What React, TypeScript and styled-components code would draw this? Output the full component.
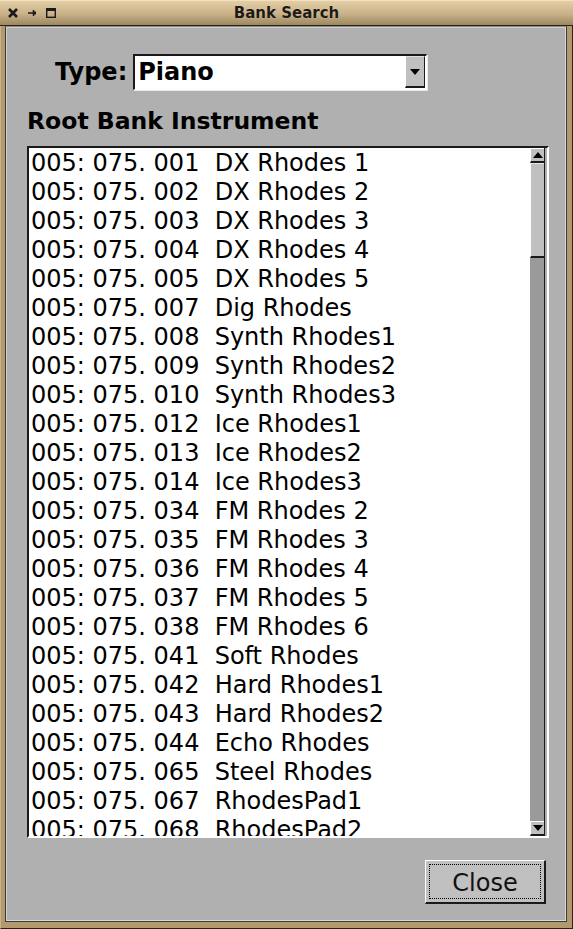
import React from "react";
import styled, { createGlobalStyle } from "styled-components";

const Global = createGlobalStyle`
  html, body { margin: 0; padding: 0; background: #b0b0b0; }
  body { font-family: "DejaVu Sans", "Liberation Sans", sans-serif; }
  * { box-sizing: border-box; }
`;

const Window = styled.div`
  width: 573px;
  height: 929px;
  display: flex;
  flex-direction: column;
  background: #b39a6e;
`;

const TitleBar = styled.div`
  height: 26px;
  flex: none;
  position: relative;
  display: flex;
  align-items: center;
  justify-content: center;
  background: linear-gradient(#e4cea6, #c8b088 55%, #9c885f);
  border-bottom: 1px solid #2a2418;
  border-top: 1px solid #f0e0c0;
`;

const TitleText = styled.div`
  font-family: "DejaVu Sans", sans-serif;
  font-weight: bold;
  font-size: 15px;
  color: #1c1a16;
  text-shadow: 0 0 1px rgba(255, 240, 210, 0.6);
`;

const TitleIcons = styled.div`
  position: absolute;
  left: 8px;
  top: 7px;
  display: flex;
  gap: 10px;
  align-items: center;
`;

const Frame = styled.div`
  flex: 1;
  display: flex;
  flex-direction: column;
  padding: 0 5px 6px 4px;
  border-left: 1px solid #c9b48c;
  border-right: 1px solid #2a2418;
  border-bottom: 1px solid #2a2418;
`;

const Content = styled.div`
  flex: 1;
  background: #b0b0b0;
  border-left: 1px solid #3a3a3a;
  border-top: 1px solid #8a8a8a;
  border-right: 1px solid #3a3a3a;
  border-bottom: 1px solid #3a3a3a;
  box-shadow: inset 1px 1px 0 #cfcfcf, inset -1px -1px 0 #d8d8d8;
  display: flex;
  flex-direction: column;
  padding: 27px 0 0 21px;
`;

const TypeRow = styled.div`
  display: flex;
  align-items: center;
  padding-left: 28px;
  gap: 6px;
`;

const BoldLabel = styled.span`
  font-family: "DejaVu Sans", sans-serif;
  font-weight: bold;
  font-size: 24px;
  color: #000;
  line-height: 28px;
`;

const Combo = styled.div`
  width: 294px;
  height: 36px;
  display: flex;
  background: #fff;
  border-top: 2px solid #1a1a1a;
  border-left: 2px solid #1a1a1a;
  border-right: 1px solid #fff;
  border-bottom: 1px solid #fff;
  box-shadow: 1px 1px 0 #e8e8e8;
`;

const ComboText = styled.div`
  flex: 1;
  font-family: "DejaVu Sans", sans-serif;
  font-weight: bold;
  font-size: 24px;
  line-height: 33px;
  padding-left: 3px;
`;

const ComboButton = styled.div`
  width: 20px;
  margin: 0 1px 1px 0;
  background: #c0c0c0;
  border-left: 1px solid #fff;
  border-top: 1px solid #e0e0e0;
  border-bottom: 2px solid #1a1a1a;
  border-right: 1px solid #1a1a1a;
  display: flex;
  align-items: center;
  justify-content: center;
`;

const SectionLabel = styled(BoldLabel)`
  display: block;
  margin-top: 17px;
  font-size: 23.5px;
`;

const ListBox = styled.div`
  margin-top: 11px;
  width: 522px;
  height: 692px;
  display: flex;
  background: #fff;
  border-top: 2px solid #1a1a1a;
  border-left: 2px solid #1a1a1a;
  border-right: 2px solid #fff;
  border-bottom: 2px solid #fff;
  box-shadow: inset -2px 0 0 #b0b0b0;
`;

const Rows = styled.div`
  flex: 1;
  overflow: hidden;
  padding: 1px 0 0 2px;
`;

const Row = styled.div`
  font-family: "DejaVu Sans", sans-serif;
  font-size: 24px;
  line-height: 29px;
  height: 29px;
  white-space: pre;
  color: #000;
`;

const ScrollBar = styled.div`
  width: 15px;
  margin-right: 2px;
  display: flex;
  flex-direction: column;
  background: #9a9a9a;
  border-right: 1px solid #1a1a1a;
`;

const ScrollButton = styled.div`
  height: 15px;
  flex: none;
  background: #c0c0c0;
  border-left: 1px solid #fff;
  border-top: 1px solid #fff;
  border-bottom: 2px solid #1a1a1a;
  display: flex;
  align-items: center;
  justify-content: center;
`;

const Thumb = styled.div`
  height: 95px;
  flex: none;
  background: #c0c0c0;
  border-left: 1px solid #fff;
  border-top: 1px solid #e8e8e8;
  border-bottom: 2px solid #1a1a1a;
`;

const Track = styled.div`
  flex: 1;
`;

const Footer = styled.div`
  display: flex;
  justify-content: flex-end;
  padding: 22px 20px 0 0;
`;

const CloseButton = styled.button`
  width: 121px;
  height: 44px;
  padding: 3px;
  background: #c0c0c0;
  border-top: 1px solid #fff;
  border-left: 1px solid #fff;
  border-right: 2px solid #1a1a1a;
  border-bottom: 2px solid #1a1a1a;
  border-radius: 0;
  font-family: "DejaVu Sans", sans-serif;
  font-size: 24px;
  color: #111;
  cursor: pointer;
`;

const Focus = styled.span`
  display: flex;
  align-items: center;
  justify-content: center;
  width: 100%;
  height: 100%;
  border: 1px dotted #000;
  padding-top: 2px;
`;

const rows = [
  "005: 075. 001  DX Rhodes 1",
  "005: 075. 002  DX Rhodes 2",
  "005: 075. 003  DX Rhodes 3",
  "005: 075. 004  DX Rhodes 4",
  "005: 075. 005  DX Rhodes 5",
  "005: 075. 007  Dig Rhodes",
  "005: 075. 008  Synth Rhodes1",
  "005: 075. 009  Synth Rhodes2",
  "005: 075. 010  Synth Rhodes3",
  "005: 075. 012  Ice Rhodes1",
  "005: 075. 013  Ice Rhodes2",
  "005: 075. 014  Ice Rhodes3",
  "005: 075. 034  FM Rhodes 2",
  "005: 075. 035  FM Rhodes 3",
  "005: 075. 036  FM Rhodes 4",
  "005: 075. 037  FM Rhodes 5",
  "005: 075. 038  FM Rhodes 6",
  "005: 075. 041  Soft Rhodes",
  "005: 075. 042  Hard Rhodes1",
  "005: 075. 043  Hard Rhodes2",
  "005: 075. 044  Echo Rhodes",
  "005: 075. 065  Steel Rhodes",
  "005: 075. 067  RhodesPad1",
  "005: 075. 068  RhodesPad2",
];

const Tri = ({ up }: { up?: boolean }) => (
  <svg width="10" height="6" viewBox="0 0 10 6">
    <polygon points={up ? "5,0 10,6 0,6" : "0,0 10,0 5,6"} fill="#000" />
  </svg>
);

export default function App() {
  return (
    <Window>
      <Global />
      <TitleBar>
        <TitleIcons>
          <svg width="10" height="10" viewBox="0 0 10 10">
            <path d="M1 1 L9 9 M9 1 L1 9" stroke="#1a1a1a" strokeWidth="2.6" />
          </svg>
          <svg width="8" height="8" viewBox="0 0 8 8">
            <path d="M0 4 H5 M5.5 1 V7" stroke="#1a1a1a" strokeWidth="1.5" />
            <rect x="5" y="2.5" width="3" height="3" fill="#1a1a1a" />
          </svg>
          <svg width="10" height="10" viewBox="0 0 10 10">
            <rect x="0.7" y="0.7" width="8.6" height="8.6" fill="none" stroke="#1a1a1a" strokeWidth="1.4" />
            <rect x="0.7" y="0.7" width="8.6" height="2.3" fill="#1a1a1a" />
          </svg>
        </TitleIcons>
        <TitleText>Bank Search</TitleText>
      </TitleBar>
      <Frame>
        <Content>
          <TypeRow>
            <BoldLabel>Type:</BoldLabel>
            <Combo>
              <ComboText>Piano</ComboText>
              <ComboButton>
                <Tri />
              </ComboButton>
            </Combo>
          </TypeRow>
          <SectionLabel>Root Bank Instrument</SectionLabel>
          <ListBox>
            <Rows>
              {rows.map((r) => (
                <Row key={r}>{r}</Row>
              ))}
            </Rows>
            <ScrollBar>
              <ScrollButton>
                <Tri up />
              </ScrollButton>
              <Thumb />
              <Track />
              <ScrollButton>
                <Tri />
              </ScrollButton>
            </ScrollBar>
          </ListBox>
          <Footer>
            <CloseButton>
              <Focus>Close</Focus>
            </CloseButton>
          </Footer>
        </Content>
      </Frame>
    </Window>
  );
}
